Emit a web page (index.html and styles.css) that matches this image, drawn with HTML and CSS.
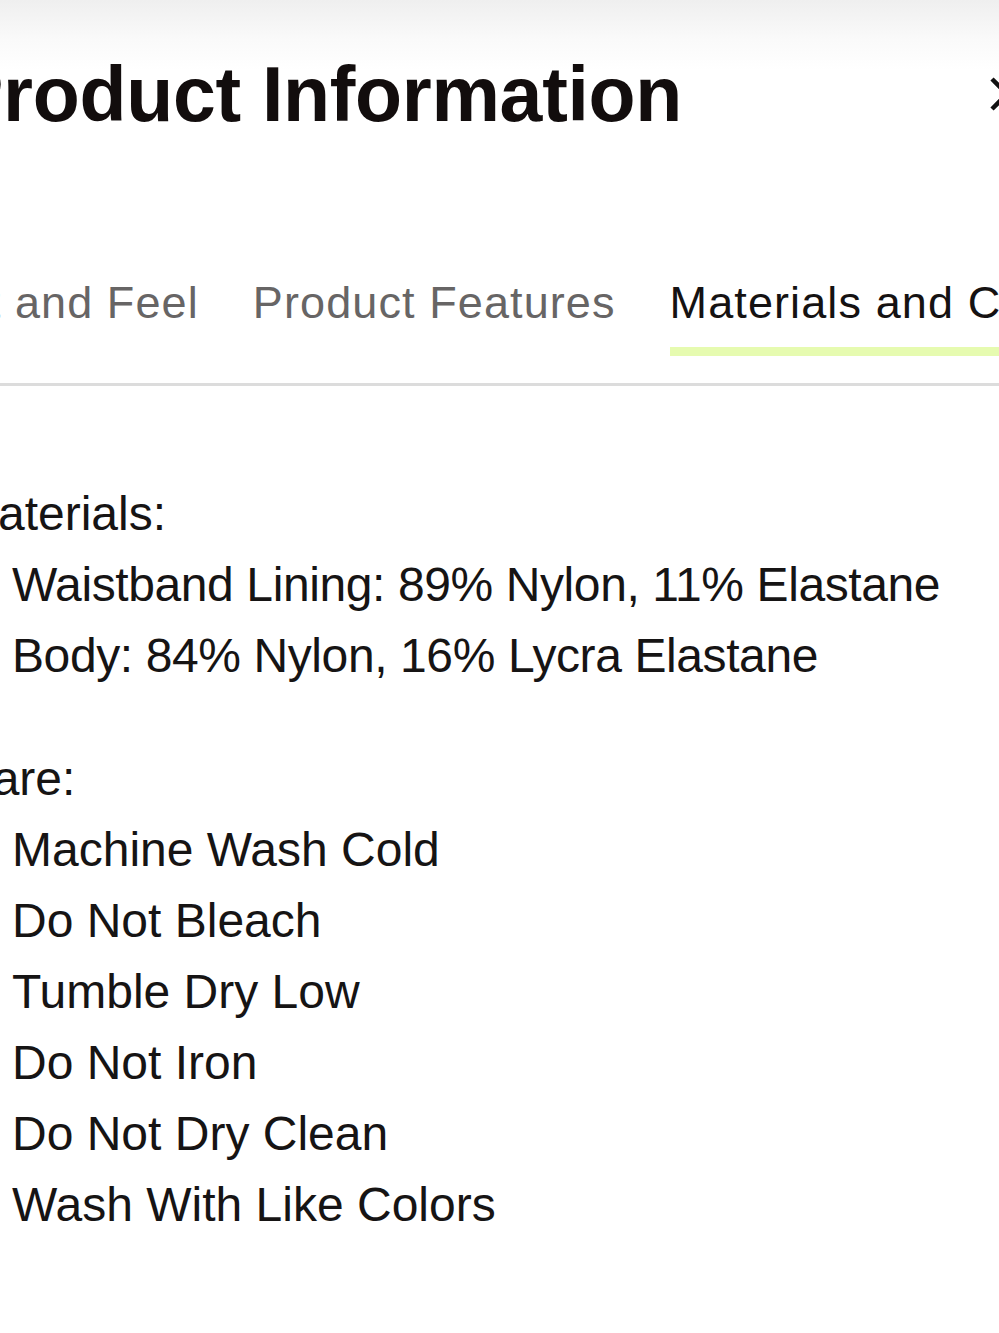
FILE: index.html
```html
<!DOCTYPE html>
<html lang="en">
<head>
<meta charset="utf-8">
<title>Product Information</title>
<link rel="stylesheet" href="styles.css">
</head>
<body>
<div class="sheet">
  <header class="header">
    <h1 class="title">Product Information</h1>
    <button class="close" aria-label="Close">
      <svg viewBox="0 0 36 36" width="36" height="36"><path d="M3 3 L33 33 M33 3 L3 33" stroke="#111" stroke-width="4.5" fill="none"/></svg>
    </button>
  </header>
  <nav class="tabs">
    <span class="tab">Fit and Feel</span>
    <span class="tab">Product Features</span>
    <span class="tab active">Materials and Care</span>
  </nav>
  <section class="content">
    <div class="group">
      <p class="heading">Materials:</p>
      <ul class="list">
        <li class="tight">Waistband Lining: 89% Nylon, 11% Elastane</li>
        <li class="tight">Body: 84% Nylon, 16% Lycra Elastane</li>
      </ul>
    </div>
    <div class="group">
      <p class="heading">Care:</p>
      <ul class="list">
        <li>Machine Wash Cold</li>
        <li>Do Not Bleach</li>
        <li>Tumble Dry Low</li>
        <li>Do Not Iron</li>
        <li>Do Not Dry Clean</li>
        <li>Wash With Like Colors</li>
      </ul>
    </div>
  </section>
</div>
</body>
</html>
```

FILE: styles.css
```css
html, body {
  margin: 0;
  padding: 0;
  overflow: hidden;
  background: #fff;
}
body {
  width: 999px;
  height: 1333px;
  font-family: "Liberation Sans", Arial, sans-serif;
  color: #161414;
  background: linear-gradient(#efefef 0px, #fafafa 40px, #ffffff 70px);
}
.sheet {
  margin-left: -51px;
  margin-right: -26px;
}
.header {
  display: flex;
  align-items: center;
  justify-content: space-between;
  padding-top: 48px;
}
.title {
  margin: 0 0 0 3px;
  font-size: 77px;
  line-height: 92px;
  font-weight: 700;
  letter-spacing: -0.3px;
  color: #120d0d;
}
.close {
  border: 0;
  background: none;
  padding: 0;
  width: 36px;
  height: 36px;
  display: block;
}
.close svg { display: block; }
.tabs {
  display: flex;
  gap: 54px;
  margin-top: 136px;
  margin-left: -1px;
  padding-bottom: 27px;
  border-bottom: 3px solid #dcdcdc;
  white-space: nowrap;
}
.tab {
  font-size: 45px;
  line-height: 54px;
  letter-spacing: 1.1px;
  color: #676565;
  padding-bottom: 17px;
  border-bottom: 9px solid transparent;
}
.tab.active {
  color: #151212;
  border-bottom-color: #e6fbb0;
  flex: 1;
}
.content {
  padding-top: 92px;
  margin-left: 9px;
}
.group + .group {
  margin-top: 52px;
}
.heading {
  margin: 0;
  font-size: 48px;
  line-height: 71px;
}
.list {
  list-style: none;
  margin: 0;
  padding: 0 0 0 54px;
}
.list li {
  font-size: 48px;
  line-height: 71px;
  white-space: nowrap;
}
.list li.tight {
  letter-spacing: -0.4px;
}
```
